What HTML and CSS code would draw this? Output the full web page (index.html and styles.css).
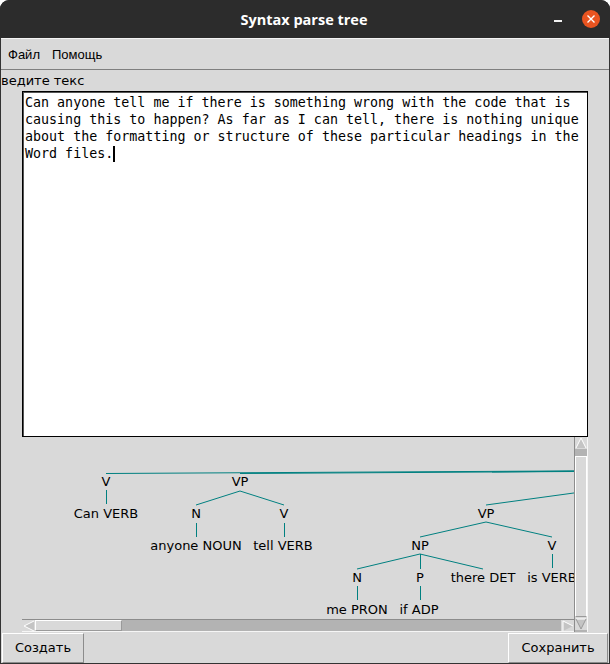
FILE: index.html
```html
<!DOCTYPE html>
<html lang="ru">
<head>
<meta charset="utf-8">
<title>Syntax parse tree</title>
<link rel="stylesheet" href="styles.css">
</head>
<body>
<div class="window">
  <header class="titlebar">
    <span class="title">Syntax parse tree</span>
    <div class="controls">
      <span class="min"></span>
      <span class="close"><svg width="8" height="8" viewBox="0 0 8 8"><path d="M0.5 0.5L7.5 7.5M7.5 0.5L0.5 7.5" stroke="#fff" stroke-width="1.4" fill="none"/></svg></span>
    </div>
  </header>
  <div class="content">
    <nav class="menubar"><span class="menu-item">Файл</span><span class="menu-item">Помощь</span></nav>
    <div class="prompt">ведите текс</div>
    <div class="editor">Can anyone tell me if there is something wrong with the code that is
causing this to happen? As far as I can tell, there is nothing unique
about the formatting or structure of these particular headings in the
Word files.<span class="caret"></span></div>
    <div class="tree-frame">
      <div class="canvas">
        <svg width="552" height="182" viewBox="0 0 552 182">
          <g stroke="#008080" stroke-width="1" fill="none">
            <line x1="84" y1="36.5" x2="720" y2="33"/>
            <line x1="218" y1="36.5" x2="720" y2="33.5"/>
            <line x1="470" y1="35" x2="720" y2="32.5"/>
            <line x1="84.5" y1="53" x2="84.5" y2="67"/>
            <line x1="218" y1="54" x2="174" y2="68"/>
            <line x1="218" y1="54" x2="262" y2="68"/>
            <line x1="174.5" y1="86" x2="174.5" y2="100"/>
            <line x1="262.5" y1="86" x2="262.5" y2="100"/>
            <line x1="464" y1="68" x2="720" y2="33"/>
            <line x1="464" y1="85" x2="398" y2="100"/>
            <line x1="464" y1="85" x2="530" y2="100"/>
            <line x1="398" y1="117" x2="335" y2="132"/>
            <line x1="398.5" y1="117" x2="398.5" y2="132"/>
            <line x1="398" y1="117" x2="461" y2="132"/>
            <line x1="530.5" y1="117" x2="530.5" y2="131"/>
            <line x1="335.5" y1="149" x2="335.5" y2="163"/>
            <line x1="398.5" y1="149" x2="398.5" y2="163"/>
          </g>
          <g class="node-text" text-anchor="middle">
            <text x="84" y="49">V</text>
            <text x="84" y="81">Can VERB</text>
            <text x="218" y="49">VP</text>
            <text x="174" y="81">N</text>
            <text x="262" y="81">V</text>
            <text x="174" y="113">anyone NOUN</text>
            <text x="261" y="113">tell VERB</text>
            <text x="464" y="81">VP</text>
            <text x="398" y="113">NP</text>
            <text x="530" y="113">V</text>
            <text x="335" y="145">N</text>
            <text x="398" y="145">P</text>
            <text x="461" y="145">there DET</text>
            <text x="530" y="145">is VERB</text>
            <text x="335" y="177">me PRON</text>
            <text x="397" y="177">if ADP</text>
          </g>
        </svg>
      </div>
      <div class="vscroll">
        <span class="arrow arrow-v"><svg width="12" height="12" viewBox="0 0 12 12"><polygon points="6,1 11,11 1,11" fill="#c4c4c4"/><polyline points="1,11 6,1 11,11" stroke="#fff" fill="none"/></svg></span>
        <span class="trough-gap"></span>
        <span class="slider slider-v"></span>
        <span class="arrow arrow-v"><svg width="12" height="12" viewBox="0 0 12 12"><polygon points="1,1 11,1 6,11" fill="#c4c4c4"/><polyline points="1,1 11,1" stroke="#fff" fill="none"/><polyline points="1,1 6,11 11,1" stroke="#9a9a9a" fill="none"/></svg></span>
      </div>
      <div class="hscroll">
        <span class="arrow arrow-h"><svg width="12" height="12" viewBox="0 0 12 12"><polygon points="1,6 11,1 11,11" fill="#c4c4c4"/><polyline points="11,11 1,6 11,1" stroke="#fff" fill="none"/></svg></span>
        <span class="slider slider-h"></span>
        <span class="trough"></span>
        <span class="arrow arrow-h"><svg width="12" height="12" viewBox="0 0 12 12"><polygon points="1,1 11,6 1,11" fill="#c4c4c4"/><polyline points="1,11 1,1 11,6" stroke="#fff" fill="none"/></svg></span>
      </div>
    </div>
    <div class="buttons">
      <button class="btn btn-create">Создать</button>
      <button class="btn btn-save">Сохранить</button>
    </div>
  </div>
</div>
</body>
</html>
```
FILE: styles.css
```css
html, body {
  margin: 0;
  padding: 0;
  background: #ffffff;
}

body {
  width: 610px;
  height: 664px;
  overflow: hidden;
}

.window {
  width: 610px;
  height: 664px;
  box-sizing: border-box;
  padding: 0 1px 1px;
  background: #333333;
  border-radius: 9px 9px 0 0;
  overflow: hidden;
  display: flex;
  flex-direction: column;
  font-family: "DejaVu Sans", sans-serif;
  font-size: 13px;
  color: #000;
}

.titlebar {
  flex: none;
  height: 38px;
  margin: 0 -1px;
  background: #2c2c2c;
  display: grid;
  grid-template-columns: 1fr auto 1fr;
  align-items: center;
}

.title {
  grid-column: 2;
  color: #ffffff;
  font-family: "Open Sans", sans-serif;
  font-weight: 700;
  font-size: 14.5px;
  padding-right: 2px;
}

.controls {
  grid-column: 3;
  justify-self: end;
  display: flex;
  align-items: center;
  gap: 20px;
  padding-right: 10px;
}

.min {
  width: 8px;
  height: 2px;
  background: #f2f2f2;
  margin-top: 4px;
}

.close {
  width: 18px;
  height: 18px;
  border-radius: 50%;
  background: #e95420;
  display: flex;
  align-items: center;
  justify-content: center;
}

.close svg {
  display: block;
}

.content {
  flex: 1;
  background: #d9d9d9;
  display: flex;
  flex-direction: column;
}

.menubar {
  flex: none;
  height: 30px;
  border-top: 1px solid #f4f4f4;
  border-bottom: 1px solid #7f7f7f;
  display: flex;
  align-items: center;
  padding-left: 7px;
  gap: 12px;
  font-family: "Liberation Sans", Arial, sans-serif;
  font-size: 13px;
  padding-top: 1px;
  box-sizing: content-box;
  height: 29px;
}

.prompt {
  flex: none;
  height: 21px;
  line-height: 22px;
  white-space: nowrap;
}

.editor {
  flex: none;
  margin-left: 21px;
  width: 566px;
  height: 346px;
  box-sizing: border-box;
  border: 1px solid #000;
  box-shadow: inset 1px 1px 0 #555;
  background: #ffffff;
  padding: 2px 2px;
  font-family: "DejaVu Sans Mono", monospace;
  font-size: 13.33px;
  line-height: 17px;
  white-space: pre;
  overflow: hidden;
}

.caret {
  display: inline-block;
  width: 2px;
  height: 16px;
  background: #000;
  vertical-align: -4px;
}

.tree-frame {
  flex: none;
  margin-left: 21px;
  width: 566px;
  height: 195px;
  display: grid;
  grid-template-columns: 552px 14px;
  grid-template-rows: 182px 13px;
}

.canvas {
  grid-row: 1;
  grid-column: 1;
  overflow: hidden;
}

.canvas svg {
  display: block;
}

.node-text {
  font-family: "DejaVu Sans", sans-serif;
  font-size: 13px;
  fill: #000;
}

.vscroll {
  grid-row: 1 / 3;
  grid-column: 2;
  display: flex;
  flex-direction: column;
  background: #b3b3b3;
  box-sizing: border-box;
  border-left: 1px solid #8c8c8c;
  border-right: 1px solid #f6f6f6;
}

.hscroll {
  grid-row: 2;
  grid-column: 1;
  display: flex;
  background: #b3b3b3;
  box-sizing: border-box;
  border-top: 1px solid #8c8c8c;
  border-bottom: 1px solid #f6f6f6;
}

.arrow {
  flex: none;
  display: flex;
  align-items: center;
  justify-content: center;
  background: #d9d9d9;
}

.arrow svg {
  display: block;
}

.arrow-v {
  height: 12px;
}

.arrow-v:last-child {
  height: 13px;
}

.arrow-h {
  width: 13px;
}

.trough-gap {
  flex: none;
  height: 7px;
}

.slider {
  flex: none;
  box-sizing: border-box;
  background: #d9d9d9;
  border-top: 1px solid #ffffff;
  border-left: 1px solid #ffffff;
  border-right: 1px solid #ffffff;
  border-bottom: 1px solid #9a9a9a;
}

.slider-v {
  height: 161px;
}

.slider-h {
  width: 87px;
  border-right-color: #9a9a9a;
}

.trough {
  flex: 1;
}

.buttons {
  flex: none;
  height: 31px;
  display: flex;
  justify-content: space-between;
  align-items: center;
  padding: 0 1px 0 1px;
}

.btn {
  height: 30px;
  box-sizing: border-box;
  background: #d9d9d9;
  border: 1px solid;
  border-color: #ffffff #8c8c8c #8c8c8c #ffffff;
  font-family: "DejaVu Sans", sans-serif;
  font-size: 13px;
  color: #000;
  padding: 0;
  margin: 0;
}

.btn-create {
  width: 82px;
}

.btn-save {
  width: 100px;
}
```
